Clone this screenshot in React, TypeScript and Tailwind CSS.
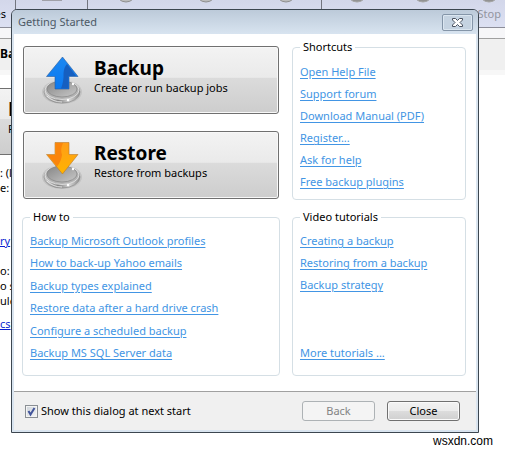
import React, { useState } from "react";

function Ring() {
  return (
    <>
      <ellipse cx="21" cy="37" rx="20" ry="12" fill="#a8a8a8" opacity="0.4" />
      <ellipse cx="21" cy="37" rx="18" ry="11" fill="url(#rim)" stroke="#8d8d8d" strokeWidth="0.7" />
      <ellipse cx="21" cy="35" rx="17" ry="9.5" fill="#b4b4b4" stroke="#e6e6e6" strokeWidth="0.8" />
      <ellipse cx="21" cy="34" rx="15" ry="8" fill="url(#dish)" stroke="#858585" strokeWidth="0.7" />
      <path d="M6 41 Q12 47 21 47" fill="none" stroke="#f4f4f4" strokeWidth="0.8" />
      <circle cx="32" cy="29" r="1.2" fill="#fff" />
      <circle cx="27" cy="45" r="1.2" fill="#fff" />
    </>
  );
}

function Defs() {
  return (
    <defs>
      <linearGradient id="rim" x1="0" x2="1" y1="0" y2="0">
        <stop offset="0" stopColor="#d0d0d0" />
        <stop offset="0.4" stopColor="#858585" />
        <stop offset="0.7" stopColor="#d4d4d4" />
        <stop offset="1" stopColor="#8f8f8f" />
      </linearGradient>
      <linearGradient id="dish" x1="0" x2="1" y1="0" y2="1">
        <stop offset="0" stopColor="#868686" />
        <stop offset="1" stopColor="#c8c8c8" />
      </linearGradient>
      <linearGradient id="blue" x1="0" x2="0" y1="0" y2="1">
        <stop offset="0" stopColor="#1c88f2" />
        <stop offset="1" stopColor="#0a78f0" />
      </linearGradient>
      <linearGradient id="orange" x1="0" x2="0" y1="0" y2="1">
        <stop offset="0" stopColor="#ff9d18" />
        <stop offset="1" stopColor="#ffb400" />
      </linearGradient>
    </defs>
  );
}

function BackupIcon() {
  return (
    <svg width="42" height="50" viewBox="0 0 42 50" aria-hidden="true">
      <Defs />
      <Ring />
      <path d="M21.5 2 L37 21.5 H28 V34 H14 V21.5 H5.500 Z" fill="url(#blue)" stroke="#2b5d9c" strokeWidth="0.6" />
      <path d="M26 9 L35 21 H27.500 V33.500 H20 Q23 26 22.500 18 Q23 12 26 9 Z" fill="#165fc0" />
    </svg>
  );
}

function RestoreIcon() {
  return (
    <svg width="42" height="50" viewBox="0 0 42 50" aria-hidden="true">
      <Defs />
      <Ring />
      <path d="M14 2.500 H28 V14.500 H37 L21.500 34 L5.500 14.500 H14 Z" fill="url(#orange)" stroke="#b9782b" strokeWidth="0.6" />
      <path d="M14.500 3 H22 Q19 9 21 15 Q20 22 16 26.500 L6.500 15 H14.500 Z" fill="#fa850c" />
    </svg>
  );
}

function BigButton({ icon, title, text }: { icon: React.ReactNode; title: string; text: string }) {
  return (
    <button
      type="button"
      className="flex h-[68px] w-full items-center gap-[11px] rounded-[3px] border border-[#707070] bg-[linear-gradient(#f3f3f3,#eaeaea_46%,#dbdbdb_47%,#cdcdcd)] pl-[17px] text-left shadow-[inset_0_0_0_1px_#f8f8f8]"
    >
      {icon}
      <span className="flex flex-col pb-2">
        <span className="text-[19px] leading-6 font-bold">{title}</span>
        <span className="leading-4">{text}</span>
      </span>
    </button>
  );
}

function Group({ title, children }: { title: string; children: React.ReactNode }) {
  return (
    <fieldset className="min-w-0 rounded-[4px] border border-[#d5dfe5] px-[7px]">
      <legend className="h-4 px-[3px] leading-4">{title}</legend>
      {children}
    </fieldset>
  );
}

function Item({ children, last = false }: { children: string; last?: boolean }) {
  return (
    <li className={last ? "mt-auto leading-[22px]" : "leading-[22px]"}>
      <a href="#" className="whitespace-nowrap text-[#4295e4] underline underline-offset-2">
        {children}
      </a>
    </li>
  );
}

const shortcuts = ["Open Help File", "Support forum", "Download Manual (PDF)", "Register...", "Ask for help", "Free backup plugins"];
const howTo = [
  "Backup Microsoft Outlook profiles",
  "How to back-up Yahoo emails",
  "Backup types explained",
  "Restore data after a hard drive crash",
  "Configure a scheduled backup",
  "Backup MS SQL Server data",
];
const videos = ["Creating a backup", "Restoring from a backup", "Backup strategy"];

function Knob({ dark = false }: { dark?: boolean }) {
  return (
    <svg width="22" height="22" viewBox="0 0 22 22" aria-hidden="true">
      <circle cx="11" cy="11" r="10" fill={dark ? "#929292" : "#bcbcbc"} stroke={dark ? "#a5a5a5" : "#8f8f8f"} />
      {!dark && <circle cx="11" cy="9" r="9" fill="#e8e8e8" />}
    </svg>
  );
}

function MainWindow() {
  return (
    <div className="min-h-screen bg-white">
      <div className="flex h-7 justify-between border-b border-[#8c8d98] bg-[linear-gradient(#d3d7ea,#dce0f2)]">
        <div className="flex">
          <span className="w-4 border-r border-[#73757f] pt-[6px] leading-4">
            <span className="flex justify-end pr-[9px]">es</span>
          </span>
          <span className="flex w-[72px] justify-center border-r border-[#73757f]">
            <span className="h-px w-5 bg-[#a0a0a8]" />
          </span>
          <span className="-mt-[19px] flex w-[234px] justify-between border-r border-[#73757f] pr-6 pl-[27px]">
            <Knob />
            <Knob />
            <Knob />
          </span>
        </div>
        <div className="flex">
          <span className="-mt-[19px] flex gap-11 pr-[5px]">
            <Knob dark />
            <Knob dark />
            <Knob dark />
          </span>
        </div>
      </div>
      <div className="h-[10px] bg-[#f6f6f8]" />
      <div className="h-8 border-t border-[#a0a0a0] bg-[#f0f0f0] pt-[7px] text-[12px] font-bold leading-4">Ba</div>
      <div className="h-[5px] bg-[#f7f7f7]" />
      <div className="mt-[13px] h-[67px] w-16 border-y border-[#707070] bg-[linear-gradient(#f3f3f3,#eaeaea_46%,#dbdbdb_47%,#cdcdcd)] pt-2 pl-2">
        <div className="text-[19px] leading-6 font-bold">R</div>
        <div className="leading-4">Re</div>
      </div>
      <div className="w-4 whitespace-nowrap pt-[10px] leading-[15px]">
        <p>: (l</p>
        <p>e: 3</p>
        <p className="pt-[38px]">
          <a href="#" className="text-[#0b1fd0] underline">ry</a>
        </p>
        <p className="pt-[15px]">o:</p>
        <p>o s</p>
        <p>ule</p>
        <p className="pt-2">
          <a href="#" className="text-[#0b1fd0] underline">cs</a>
        </p>
      </div>
    </div>
  );
}

export default function App() {
  const [show, setShow] = useState(true);
  return (
    <div className="relative min-h-screen overflow-hidden bg-white font-['Noto_Sans','Open_Sans',sans-serif] text-[11px] text-black">
      <MainWindow />
      <span className="absolute top-[6px] right-1 leading-4 text-[#9395a0]">Stop</span>

      <section
        role="dialog"
        aria-labelledby="dialog-title"
        className="absolute top-[9px] right-[26px] left-[11px] rounded-t-[6px] border border-[#3c4650] bg-[#d9e4ef] p-[2px] pt-0"
      >
        <header className="-mx-[2px] flex h-6 items-center justify-between rounded-t-[5px] bg-[linear-gradient(#bccad9,#d8e4f0)] pr-[5px] pl-[6px]">
          <h1 id="dialog-title" className="pt-px text-[#4d5966]">Getting Started</h1>
          <button
            type="button"
            aria-label="Close window"
            className="flex h-[17px] w-[31px] items-center justify-center rounded-[2px] border border-[#8495a8] bg-[#c5d3e1] shadow-[inset_0_0_0_1px_#dbe6f0]"
          >
            <svg width="13" height="11" viewBox="0 0 13 11" aria-hidden="true">
              <path d="M1.500 1.500 H4.500 L6.500 3.500 L8.500 1.500 H11.500 V3 L9 5.500 L11.500 8 V9.500 H8.500 L6.500 7.500 L4.500 9.500 H1.500 V8 L4 5.500 L1.500 3 Z" fill="#fff" stroke="#4a5260" strokeWidth="1" />
            </svg>
          </button>
        </header>

        <main className="grid grid-cols-[258fr_174fr] gap-x-3 gap-y-[9px] bg-white pt-[5px] pr-[10px] pb-[15px] pl-2">
          <div className="flex flex-col gap-[17px] px-px pt-[7px]">
            <BigButton icon={<BackupIcon />} title="Backup" text="Create or run backup jobs" />
            <BigButton icon={<RestoreIcon />} title="Restore" text="Restore from backups" />
          </div>
          <Group title="Shortcuts">
            <ul className="py-[6px]">
              {shortcuts.map((s) => (
                <Item key={s}>{s}</Item>
              ))}
            </ul>
          </Group>
          <Group title="How to">
            <ul className="mt-[5px] mb-[11px] flex h-[134px] flex-col justify-between">
              {howTo.map((s) => (
                <Item key={s}>{s}</Item>
              ))}
            </ul>
          </Group>
          <Group title="Video tutorials">
            <ul className="mt-[5px] mb-[11px] flex h-[134px] flex-col">
              {videos.map((s) => (
                <Item key={s}>{s}</Item>
              ))}
              <Item last>More tutorials ...</Item>
            </ul>
          </Group>
        </main>

        <footer className="flex h-[39px] items-center justify-between border-t border-[#a0a0a0] bg-[#f0f0f0] pr-4 pl-[11px]">
          <label className="flex items-center gap-[3px]">
            <span className="relative flex size-[13px]">
              <input
                type="checkbox"
                checked={show}
                onChange={(e) => setShow(e.target.checked)}
                className="size-[13px] appearance-none border border-[#8a8f94] bg-[linear-gradient(135deg,#cdd3da,#f6f6f6)] shadow-[inset_0_0_0_1px_#f4f4f4]"
              />
              {show && (
                <svg className="pointer-events-none absolute inset-0" width="13" height="13" viewBox="0 0 13 13" aria-hidden="true">
                  <path d="M3.500 6 L5.500 9.500 L9.500 3" fill="none" stroke="#43559b" strokeWidth="2" />
                </svg>
              )}
            </span>
            Show this dialog at next start
          </label>
          <div className="flex gap-3">
            <button type="button" disabled className="h-5 w-[73px] rounded-[3px] border border-[#adb2b5] bg-[#f4f4f4] leading-4 text-[#838383]">
              Back
            </button>
            <button
              type="button"
              className="h-5 w-[73px] rounded-[3px] border border-[#707070] bg-[linear-gradient(#f2f2f2,#ebebeb_49%,#dddddd_50%,#cfcfcf)] leading-4 shadow-[inset_0_0_0_1px_#fafafa]"
            >
              Close
            </button>
          </div>
        </footer>
      </section>

      <span className="absolute right-3 bottom-[2px] font-['Liberation_Sans',sans-serif] text-[12px] leading-4">wsxdn.com</span>
    </div>
  );
}
